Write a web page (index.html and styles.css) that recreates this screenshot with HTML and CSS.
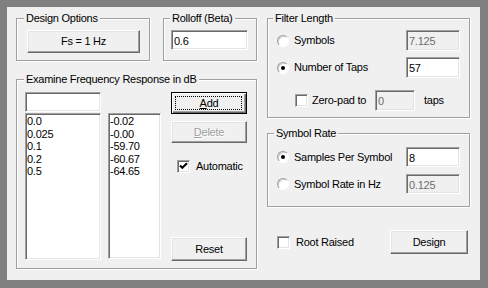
FILE: index.html
```html
<!DOCTYPE html>
<html lang="en">
<head>
  <meta charset="UTF-8">
  <title>Raised Cosine Filter Design</title>
  <link rel="stylesheet" href="styles.css">
</head>
<body>

  <div class="dialog">

    <div class="col-left">
      <div class="top-row">
        <fieldset class="group design-opts">
          <legend>Design Options</legend>
          <div class="group-body">
            <button class="btn fs-btn">Fs = 1 Hz</button>
          </div>
        </fieldset>
        <fieldset class="group rolloff">
          <legend>Rolloff (Beta)</legend>
          <div class="group-body">
            <input class="edit rolloff-edit" type="text" value="0.6">
          </div>
        </fieldset>
      </div>

      <fieldset class="group examine">
        <legend>Examine Frequency Response in dB</legend>
        <div class="group-body examine-body">
          <div class="freq-col">
            <input class="edit freq-edit" type="text" value="">
            <div class="listbox freq-list">
              <div>0.0</div>
              <div>0.025</div>
              <div>0.1</div>
              <div>0.2</div>
              <div>0.5</div>
            </div>
          </div>
          <div class="listbox resp-list">
            <div>-0.02</div>
            <div>-0.00</div>
            <div>-59.70</div>
            <div>-60.67</div>
            <div>-64.65</div>
          </div>
          <div class="btn-col">
            <button class="btn default-btn"><u>A</u>dd</button>
            <button class="btn delete-btn" disabled><u>D</u>elete</button>
            <label class="check-row auto-row">
              <span class="chk"><svg width="9" height="9" viewBox="0 0 9 9"><polyline points="1,3.5 3.3,5.8 8,1.2" fill="none" stroke="#000" stroke-width="2"/></svg></span>
              Automatic
            </label>
            <button class="btn reset-btn">Reset</button>
          </div>
        </div>
      </fieldset>
    </div>

    <div class="col-right">
      <fieldset class="group filter-length">
        <legend>Filter Length</legend>
        <div class="group-body">
          <div class="opt-row">
            <span class="radio"></span>
            <span class="opt-label">Symbols</span>
            <input class="edit num-edit" type="text" value="7.125" disabled>
          </div>
          <div class="opt-row taps-row">
            <span class="radio on"></span>
            <span class="opt-label">Number of Taps</span>
            <input class="edit num-edit" type="text" value="57">
          </div>
          <div class="opt-row zeropad-row">
            <span class="chk"></span>
            <span class="zp-label">Zero-pad to</span>
            <input class="edit zp-edit" type="text" value="0" disabled>
            <span class="taps-label">taps</span>
          </div>
        </div>
      </fieldset>

      <fieldset class="group symbol-rate">
        <legend>Symbol Rate</legend>
        <div class="group-body">
          <div class="opt-row">
            <span class="radio on"></span>
            <span class="opt-label">Samples Per Symbol</span>
            <input class="edit num-edit" type="text" value="8">
          </div>
          <div class="opt-row rate-row">
            <span class="radio"></span>
            <span class="opt-label">Symbol Rate in Hz</span>
            <input class="edit num-edit" type="text" value="0.125" disabled>
          </div>
        </div>
      </fieldset>

      <div class="bottom-row">
        <label class="check-row root-row">
          <span class="chk"></span>
          Root Raised
        </label>
        <button class="btn design-btn">Design</button>
      </div>
    </div>

  </div>

</body>
</html>
```

FILE: styles.css
```css
body {
  margin: 0;
  padding: 7px;
  background: #808080;
  color: #000;
  font-family: "Liberation Sans", Arial, sans-serif;
  font-size: 11px;
  letter-spacing: -0.25px;
  line-height: 13px;
}

.dialog {
  width: 473px;
  height: 273px;
  box-sizing: border-box;
  padding: 5px 0 0 9px;
  background: #f0f0f0;
  display: flex;
  gap: 10px;
}

/* group boxes */
.group {
  margin: 0;
  padding: 0;
  min-width: 0;
  box-sizing: border-box;
  border: 1px solid #a0a0a0;
  box-shadow: inset 1px 1px 0 #fff, 1px 1px 0 #fff;
}

.group legend {
  padding: 0 2px;
  margin-left: 6px;
  line-height: 13px;
  background: #f0f0f0;
}

.group-body {
  box-sizing: border-box;
}

/* left column */
.col-left {
  width: 241px;
  display: flex;
  flex-direction: column;
  gap: 12px;
}

.top-row {
  display: flex;
  gap: 13px;
}

.design-opts {
  width: 134px;
}

.design-opts legend,
.examine legend {
  margin-left: 7px;
}

.design-opts .group-body {
  padding: 5px 9px 7px 10px;
}

.rolloff {
  width: 94px;
}

.rolloff .group-body {
  padding: 5px 8px 0 7px;
}

.examine {
  height: 196px;
}

.examine-body {
  display: flex;
  height: 182px;
  padding: 6px 9px 7px 8px;
}

.freq-col {
  width: 76px;
  display: flex;
  flex-direction: column;
  gap: 1px;
}

.listbox {
  box-sizing: border-box;
  background: #fff;
  border: 1px solid;
  border-color: #a0a0a0 #fff #fff #a0a0a0;
  box-shadow: inset 1px 1px 0 #696969, inset -1px -1px 0 #e3e3e3;
  padding: 1px 1px;
  line-height: 12.5px;
}

.freq-list {
  height: 147px;
}

.resp-list {
  width: 53px;
  height: 146px;
  margin: 21px 0 0 7px;
}

.btn-col {
  width: 76px;
  margin-left: 10px;
  display: flex;
  flex-direction: column;
}

/* controls */
.btn {
  box-sizing: border-box;
  position: relative;
  margin: 0;
  padding: 0;
  font: inherit;
  letter-spacing: inherit;
  color: #000;
  background: #f0f0f0;
  border: 1px solid;
  border-color: #fff #696969 #696969 #fff;
  box-shadow: inset -1px -1px 0 #a0a0a0, inset 1px 1px 0 #e3e3e3;
}

.btn:disabled {
  color: #a0a0a0;
  text-shadow: 1px 1px 0 #fff;
}

.fs-btn {
  width: 113px;
  height: 23px;
}

.default-btn {
  height: 22px;
  border-color: #000;
  box-shadow: inset 1px 1px 0 #fff, inset -1px -1px 0 #696969, inset -2px -2px 0 #a0a0a0;
}

.default-btn::after {
  content: "";
  position: absolute;
  inset: 3px 4px 3px 3px;
  border: 1px dotted #000;
}

.delete-btn {
  height: 22px;
  margin-top: 7px;
}

.reset-btn {
  height: 24px;
  margin-top: auto;
}

.design-btn {
  width: 78px;
  height: 24px;
}

.edit {
  box-sizing: border-box;
  margin: 0;
  padding: 1px 2px 0;
  font: inherit;
  letter-spacing: inherit;
  color: #000;
  background: #fff;
  border: 1px solid;
  border-color: #a0a0a0 #fff #fff #a0a0a0;
  box-shadow: inset 1px 1px 0 #696969, inset -1px -1px 0 #e3e3e3;
  outline: none;
}

.edit:disabled {
  background: #f0f0f0;
  color: #6d6d6d;
}

.rolloff-edit {
  width: 77px;
  height: 20px;
}

.freq-edit {
  width: 76px;
  height: 20px;
}

.num-edit {
  width: 54px;
  height: 100%;
  margin-left: auto;
}

.zp-edit {
  width: 40px;
  height: 100%;
}

.chk {
  box-sizing: border-box;
  width: 13px;
  height: 13px;
  flex: none;
  display: inline-flex;
  align-items: center;
  justify-content: center;
  background: #fff;
  border: 1px solid;
  border-color: #a0a0a0 #fff #fff #a0a0a0;
  box-shadow: inset 1px 1px 0 #696969, inset -1px -1px 0 #e3e3e3;
}

.radio {
  box-sizing: border-box;
  width: 12px;
  height: 12px;
  flex: none;
  margin-right: 5px;
  display: inline-flex;
  align-items: center;
  justify-content: center;
  border-radius: 50%;
  background: #fff;
  border: 1px solid;
  border-color: #a0a0a0 #fff #fff #a0a0a0;
  box-shadow: inset 1px 1px 0 #d0d0d0;
}

.radio.on::after {
  content: "";
  width: 4px;
  height: 4px;
  border-radius: 50%;
  background: #000;
}

.check-row {
  display: flex;
  align-items: center;
  gap: 6px;
}

.auto-row {
  margin: 17px 0 0 6px;
}

/* right column */
.col-right {
  width: 203px;
  display: flex;
  flex-direction: column;
}

.filter-length {
  height: 106px;
}

.filter-length legend {
  margin-left: 5px;
}

.filter-length .group-body {
  padding: 5px 9px 6px 9px;
}

.symbol-rate {
  height: 80px;
  margin-top: 9px;
}

.symbol-rate .group-body {
  padding: 7px 9px 12px 9px;
}

.opt-row {
  display: flex;
  align-items: center;
  height: 21px;
}

.taps-row {
  margin-top: 6px;
}

.zeropad-row {
  margin-top: 12px;
  padding-left: 18px;
}

.zeropad-row .chk {
  margin-right: 4px;
}

.zp-label {
  width: 63px;
}

.taps-label {
  margin-left: 9px;
}

.symbol-rate .opt-row {
  height: 20px;
}

.rate-row {
  margin-top: 7px;
}

.bottom-row {
  margin-top: 23px;
  height: 24px;
  display: flex;
  align-items: center;
  justify-content: space-between;
  padding: 0 2px 0 10px;
}
```
